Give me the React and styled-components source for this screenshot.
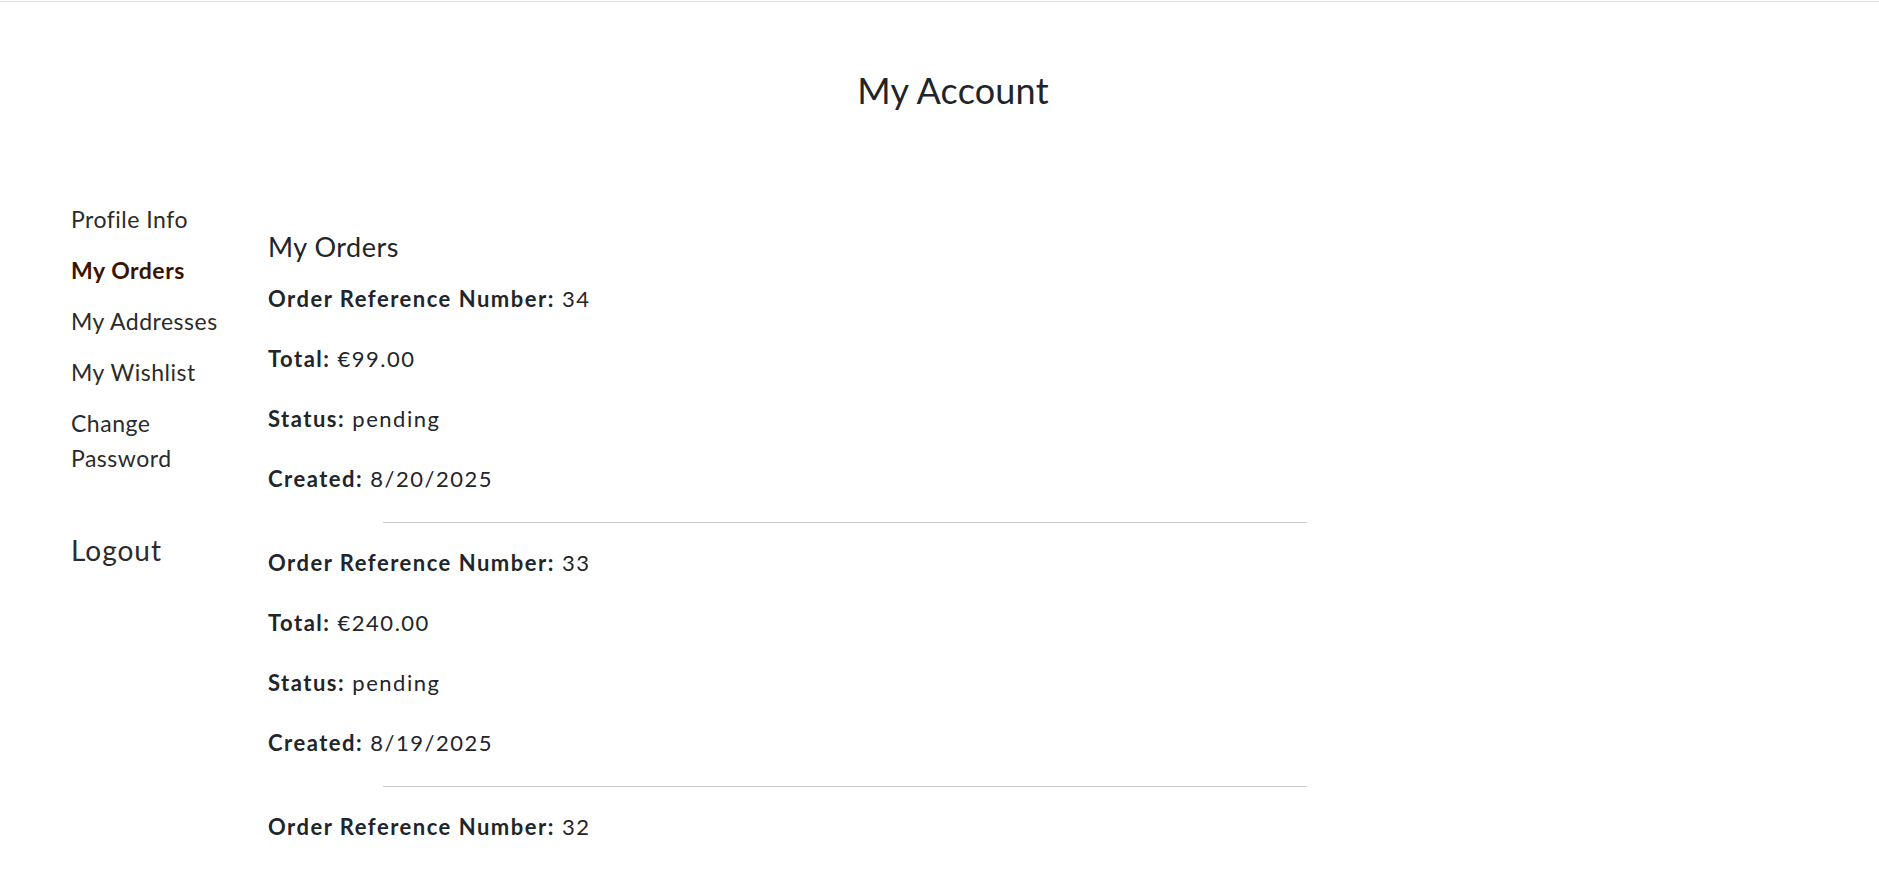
import styled, { createGlobalStyle } from "styled-components";

const GlobalStyle = createGlobalStyle`
  html, body {
    margin: 0;
    padding: 0;
    background: #ffffff;
  }
  body {
    font-family: Lato, "Noto Sans", sans-serif;
    color: #212529;
  }
  * {
    box-sizing: border-box;
  }
`;

const TopLine = styled.div`
  height: 1px;
  margin-top: 1px;
  background: #e2e2e2;
`;

const Header = styled.header`
  display: flex;
  justify-content: center;
  padding: 67px 0 0 27px;
`;

const Title = styled.h1`
  margin: 0;
  font-size: 36px;
  line-height: 43px;
  font-weight: 400;
  letter-spacing: 0.2px;
  color: #212529;
`;

const AccountRow = styled.div`
  display: flex;
  align-items: flex-start;
  padding: 90px 0 0 71px;
`;

const Sidebar = styled.nav`
  width: 197px;
  flex-shrink: 0;
  display: flex;
  flex-direction: column;
`;

const NavList = styled.ul`
  list-style: none;
  margin: 0;
  padding: 0;
  display: flex;
  flex-direction: column;
  gap: 16px;
`;

const NavItem = styled.li`
  max-width: 155px;
  font-size: 23px;
  line-height: 35px;
  letter-spacing: 0.5px;
  font-weight: ${(props) => (props.active ? 700 : 400)};
  color: ${(props) => (props.active ? "#3b1200" : "#2b2b2b")};
  cursor: pointer;
`;

const LogoutButton = styled.button`
  margin-top: 54px;
  padding: 0;
  border: none;
  background: none;
  text-align: left;
  font-family: inherit;
  font-size: 28px;
  line-height: 40px;
  letter-spacing: 1px;
  font-weight: 400;
  color: #2b2b2b;
  cursor: pointer;
`;

const Main = styled.main`
  width: 1154px;
  padding-top: 29px;
`;

const SectionTitle = styled.h2`
  margin: 0 0 21px 0;
  font-size: 27px;
  line-height: 32px;
  letter-spacing: 0.5px;
  font-weight: 400;
  color: #212529;
`;

const OrderCard = styled.div`
  display: flex;
  flex-direction: column;
  gap: 30px;
`;

const OrderLine = styled.p`
  margin: 0;
  font-size: 22px;
  line-height: 30px;
  letter-spacing: 1.5px;
  color: #212529;
`;

const Label = styled.strong`
  font-weight: 700;
`;

const Divider = styled.hr`
  width: 80%;
  margin: 28px auto 25px auto;
  border: none;
  border-top: 1px solid #cccccc;
`;

const navItems = [
  { label: "Profile Info" },
  { label: "My Orders", active: true },
  { label: "My Addresses" },
  { label: "My Wishlist" },
  { label: "Change Password" },
];

const orders = [
  { ref: 34, total: "€99.00", status: "pending", created: "8/20/2025" },
  { ref: 33, total: "€240.00", status: "pending", created: "8/19/2025" },
  { ref: 32, total: "€150.00", status: "pending", created: "8/18/2025" },
];

function App() {
  return (
    <>
      <GlobalStyle />
      <TopLine />
      <Header>
        <Title>My Account</Title>
      </Header>
      <AccountRow>
        <Sidebar>
          <NavList>
            {navItems.map((item) => (
              <NavItem key={item.label} active={item.active}>
                {item.label}
              </NavItem>
            ))}
          </NavList>
          <LogoutButton>Logout</LogoutButton>
        </Sidebar>
        <Main>
          <SectionTitle>My Orders</SectionTitle>
          {orders.map((order, i) => (
            <div key={order.ref}>
              {i > 0 && <Divider />}
              <OrderCard>
                <OrderLine>
                  <Label>Order Reference Number:</Label> {order.ref}
                </OrderLine>
                <OrderLine>
                  <Label>Total:</Label> {order.total}
                </OrderLine>
                <OrderLine>
                  <Label>Status:</Label> {order.status}
                </OrderLine>
                <OrderLine>
                  <Label>Created:</Label> {order.created}
                </OrderLine>
              </OrderCard>
            </div>
          ))}
        </Main>
      </AccountRow>
    </>
  );
}

export default App;
